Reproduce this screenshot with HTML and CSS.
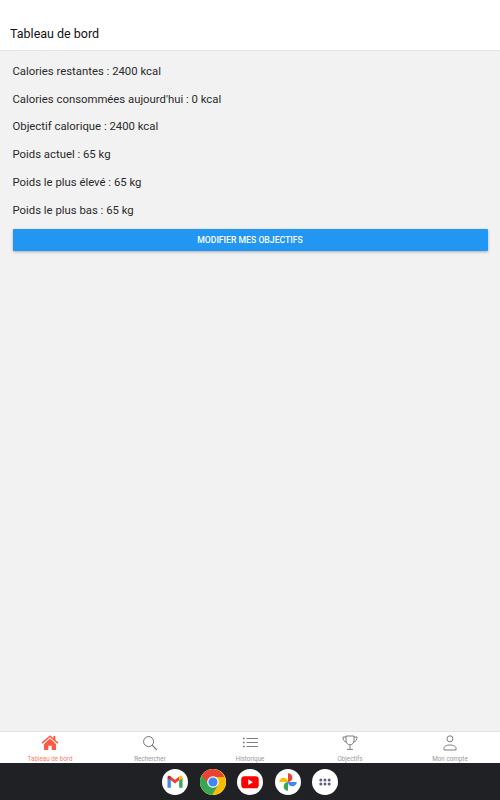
FILE: index.html
```html
<!DOCTYPE html>
<html lang="fr">
<head>
<meta charset="utf-8">
<title>Tableau de bord</title>
<link rel="stylesheet" href="styles.css">
</head>
<body>
<div class="app">
  <header class="header"><h1 class="title">Tableau de bord</h1></header>
  <main class="content">
    <p class="stat">Calories restantes : 2400 kcal</p>
    <p class="stat">Calories consommées aujourd'hui : 0 kcal</p>
    <p class="stat">Objectif calorique : 2400 kcal</p>
    <p class="stat">Poids actuel : 65 kg</p>
    <p class="stat">Poids le plus élevé : 65 kg</p>
    <p class="stat">Poids le plus bas : 65 kg</p>
    <button class="primary">MODIFIER MES OBJECTIFS</button>
  </main>
  <nav class="tabs">
    <div class="tab active">
      <svg class="tab-icon" viewBox="0 0 18 18"><path d="M9 1.200 .6 8.600l1 1.100L9 3.200l7.400 6.500 1-1.100-3-2.600V2h-2v2.200z" fill="#ff5a45"/><path d="M9 4.600 3 9.900V16h4.300v-4.200h3.400V16H15V9.900z" fill="#ff5a45"/></svg>
      <span class="tab-label">Tableau de bord</span>
    </div>
    <div class="tab">
      <svg class="tab-icon" viewBox="0 0 18 18" fill="none" stroke="#707070" stroke-width="1"><circle cx="7.600" cy="7.600" r="5"/><path d="m11.200 11.200 4.600 4.800" stroke-width="1.100"/></svg>
      <span class="tab-label">Rechercher</span>
    </div>
    <div class="tab">
      <svg class="tab-icon" viewBox="0 0 18 18" fill="none" stroke="#707070" stroke-width=".9"><path d="M5.500 4.500h11.500M5.500 8.500h11.500M5.500 12.500h11.500"/><path d="M2 4.500h1.600M2 8.500h1.600M2 12.500h1.600" stroke-width="1.300"/></svg>
      <span class="tab-label">Historique</span>
    </div>
    <div class="tab">
      <svg class="tab-icon" viewBox="0 0 18 18" fill="none" stroke="#707070" stroke-width=".9"><path d="M5 2h8v4.200c0 2.800-1.700 4.600-4 4.600s-4-1.800-4-4.600z"/><path d="M5 3H2c0 3 1.100 4.500 3.500 5.200M13 3h3c0 3-1.100 4.500-3.500 5.200M9 10.800v4.200M6 15.400h6"/></svg>
      <span class="tab-label">Objectifs</span>
    </div>
    <div class="tab">
      <svg class="tab-icon" viewBox="0 0 18 18" fill="none" stroke="#707070" stroke-width=".9"><circle cx="9" cy="4.800" r="3"/><path d="M3 16v-1.800c0-2 2.700-3.200 6-3.200s6 1.200 6 3.200V16z"/></svg>
      <span class="tab-label">Mon compte</span>
    </div>
  </nav>
  <footer class="dock">
    <div class="dock-app">
      <svg class="dock-icon" viewBox="0 0 24 24"><path d="M3 19V7l4 3v9z" fill="#4285f4"/><path d="M21 19V7l-4 3v9z" fill="#34a853"/><path d="M7 10 12 13.800 17 10V5.500L12 9.300 7 5.500z" fill="#ea4335"/><path d="M3 7.500V6.500C3 4.800 5 4 6.200 4.900L7 5.500V10z" fill="#c5221f"/><path d="M21 7.500V6.500C21 4.800 19 4 17.800 4.900L17 5.500V10z" fill="#fbbc04"/></svg>
    </div>
    <div class="dock-app chrome">
      <svg class="chrome-icon" viewBox="0 0 26 26"><circle cx="13" cy="13" r="13" fill="#fbbc04"/><path d="M13 0a13 13 0 0 0-11.260 6.500L7 15.500 13 8h11.260A13 13 0 0 0 13 0" fill="#ea4335"/><path d="M1.740 6.500A13 13 0 0 0 12 25.960L17.500 17 8.500 15.500z" fill="#34a853"/><circle cx="13" cy="13" r="5.800" fill="#fff"/><circle cx="13" cy="13" r="4.600" fill="#4285f4"/></svg>
    </div>
    <div class="dock-app">
      <svg class="dock-icon" viewBox="0 0 24 24"><rect x="1.500" y="5" width="21" height="14.500" rx="4" fill="#f00"/><path d="m10 8.700 5.500 3.500-5.500 3.500z" fill="#fff"/></svg>
    </div>
    <div class="dock-app">
      <svg class="dock-icon" viewBox="0 0 24 24"><path d="M12 12H1.500a5.250 5.250 0 0 1 10.500 0z" fill="#fbbc04"/><path d="M12 12V1.500a5.250 5.250 0 0 1 0 10.500z" fill="#ea4335"/><path d="M12 12h10.500a5.250 5.250 0 0 1-10.500 0z" fill="#4285f4"/><path d="M12 12v10.500a5.250 5.250 0 0 1 0-10.500z" fill="#34a853"/></svg>
    </div>
    <div class="dock-app">
      <svg class="dock-icon" viewBox="0 0 24 24" fill="#5f6080"><circle cx="7" cy="9.500" r="1.800"/><circle cx="12" cy="9.500" r="1.800"/><circle cx="17" cy="9.500" r="1.800"/><circle cx="7" cy="14.500" r="1.800"/><circle cx="12" cy="14.500" r="1.800"/><circle cx="17" cy="14.500" r="1.800"/></svg>
    </div>
  </footer>
</div>
</body>
</html>
```
FILE: styles.css
```css
* { box-sizing: border-box; }
html, body { margin: 0; height: 100%; }
body { font-family: Roboto, "Liberation Sans", sans-serif; background: #f2f2f2; color: #111; }
.app { display: flex; flex-direction: column; height: 800px; width: 500px; overflow: hidden; }
.header { height: 51px; background: #fff; border-bottom: 1px solid #e6e6e6; padding: 25px 10px 0; flex: none; }
.title { margin: 0; font-size: 12.500px; line-height: 18px; font-weight: 400; color: #111; }
.content { flex: 1; padding: 5.950px 12.500px 0; }
.stat { margin: 0; height: 27.800px; display: flex; align-items: center; font-size: 11.330px; color: #2a2a2a; }
.primary { display: block; width: 100%; height: 22px; margin-top: 5.750px; border: 0; border-radius: 1px; background: #2196f3; color: #fff; font: 500 8.670px Roboto, sans-serif; box-shadow: 0 1px 3px rgba(0,0,0,.3); padding: 0; }
.tabs { flex: none; height: 32px; background: #fff; border-top: 1px solid #e4e4e4; display: grid; grid-template-columns: repeat(5, 1fr); }
.tab { display: flex; flex-direction: column; align-items: center; padding-top: 2px; color: #999; }
.tab.active { color: #ff7a68; }
.tab-icon { width: 18px; height: 18px; display: block; }
.tab-label { font-size: 6.300px; line-height: 8px; margin-top: 2.500px; }
.dock { flex: none; height: 37px; background: #202124; display: flex; justify-content: center; align-items: center; gap: 11.500px; }
.dock-app { width: 26px; height: 26px; border-radius: 50%; background: #fff; display: flex; align-items: center; justify-content: center; }
.dock-icon { width: 20px; height: 20px; display: block; }
.chrome-icon { width: 26px; height: 26px; display: block; }
```
